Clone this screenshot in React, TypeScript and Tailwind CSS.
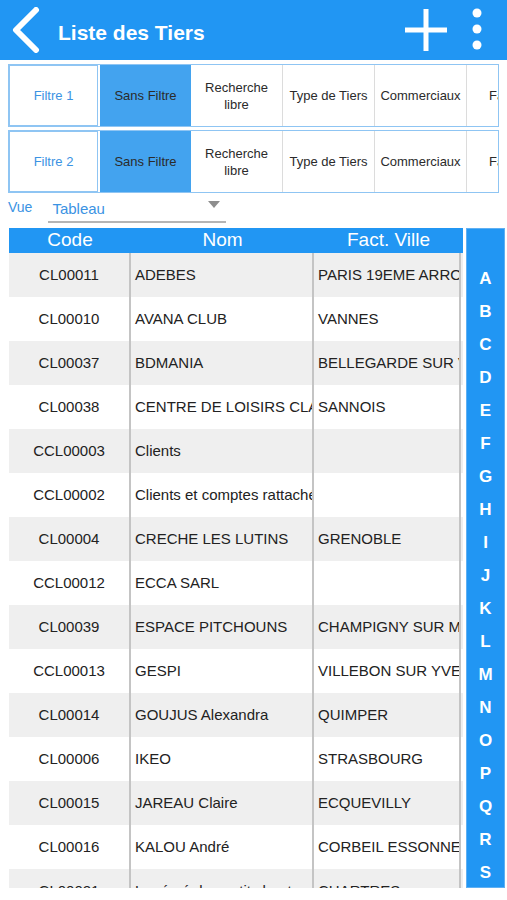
import React from "react";

const font = { fontFamily: '"Liberation Sans", Arial, sans-serif' };

const filterCells = ["Sans Filtre", "Recherche libre", "Type de Tiers", "Commerciaux", "Fa"];

type Row = { code: string; nom: string; ville: string };

const rows: Row[] = [
  { code: "CL00011", nom: "ADEBES", ville: "PARIS 19EME ARRONDISSEMENT" },
  { code: "CL00010", nom: "AVANA CLUB", ville: "VANNES" },
  { code: "CL00037", nom: "BDMANIA", ville: "BELLEGARDE SUR VALSERINE" },
  { code: "CL00038", nom: "CENTRE DE LOISIRS CLAPOTIS", ville: "SANNOIS" },
  { code: "CCL00003", nom: "Clients", ville: "" },
  { code: "CCL00002", nom: "Clients et comptes rattachés", ville: "" },
  { code: "CL00004", nom: "CRECHE LES LUTINS", ville: "GRENOBLE" },
  { code: "CCL00012", nom: "ECCA SARL", ville: "" },
  { code: "CL00039", nom: "ESPACE PITCHOUNS", ville: "CHAMPIGNY SUR MARNE" },
  { code: "CCL00013", nom: "GESPI", ville: "VILLEBON SUR YVETTE" },
  { code: "CL00014", nom: "GOUJUS Alexandra", ville: "QUIMPER" },
  { code: "CL00006", nom: "IKEO", ville: "STRASBOURG" },
  { code: "CL00015", nom: "JAREAU Claire", ville: "ECQUEVILLY" },
  { code: "CL00016", nom: "KALOU André", ville: "CORBEIL ESSONNES" },
  { code: "CL00021", nom: "La récré des petits bouts", ville: "CHARTRES" },
];

const letters = "ABCDEFGHIJKLMNOPQRS".split("");

const FilterRow = ({ label }: { label: string }) => (
  <div className="mx-2 flex h-[63px] overflow-hidden border border-[#8fc5f3]">
    <div className="flex w-[89px] shrink-0 items-center justify-center border border-[#8fc5f3] text-[13px] text-[#3b93e3]">
      {label}
    </div>
    <div className="ml-[2px] flex w-[91px] shrink-0 items-center justify-center bg-[#43a3ef] text-[13px] text-[#2b2b2b]">
      Sans Filtre
    </div>
    {filterCells.slice(1).map((c) => (
      <div
        key={c}
        className="flex w-[92px] shrink-0 items-center justify-center border-r border-[#dcdcdc] px-1 text-center text-[13px] leading-[17px] text-[#2b2b2b]"
      >
        {c === "Recherche libre" ? (
          <span>
            Recherche
            <br />
            libre
          </span>
        ) : c === "Fa" ? (
          <span className="w-full pl-[18px] text-left">Fa</span>
        ) : (
          c
        )}
      </div>
    ))}
  </div>
);

export default function App() {
  return (
    <div className="flex h-[900px] w-[507px] flex-col overflow-hidden bg-white" style={font}>
      <header className="flex h-[60px] shrink-0 items-center bg-[#2196f3] text-white">
        <svg width="30" height="46" viewBox="0 0 30 46" className="ml-[10px]">
          <path d="M26 3 L6 23 L26 43" fill="none" stroke="white" strokeWidth="6" strokeLinecap="round" strokeLinejoin="round" />
        </svg>
        <h1 className="ml-[18px] mt-[6px] text-[21px] font-bold">Liste des Tiers</h1>
        <div className="ml-auto flex items-center">
          <svg width="46" height="46" viewBox="0 0 46 46">
            <path d="M23 2 V44 M2 23 H44" stroke="white" strokeWidth="5" />
          </svg>
          <svg width="14" height="46" viewBox="0 0 14 46" className="ml-[21px] mr-[23px]">
            <circle cx="7" cy="6" r="4.5" fill="white" />
            <circle cx="7" cy="22" r="4.5" fill="white" />
            <circle cx="7" cy="38" r="4.5" fill="white" />
          </svg>
        </div>
      </header>

      <div className="mt-1 flex flex-col gap-[3px]">
        <FilterRow label="Filtre 1" />
        <FilterRow label="Filtre 2" />
      </div>

      <div className="flex h-[30px] shrink-0 items-end">
        <span className="mb-[5px] ml-2 text-[14px] text-[#3b93e3]">Vue</span>
        <div className="relative ml-[16px] flex h-[26px] w-[178px] items-center border-b-2 border-[#b5b5b5]">
          <span className="ml-[4px] text-[15px] text-[#3b93e3]">Tableau</span>
          <svg width="12" height="8" viewBox="0 0 12 8" className="absolute right-[6px] top-[4px]">
            <path d="M0 0 H12 L6 7 Z" fill="#8e8e8e" />
          </svg>
        </div>
      </div>

      <div className="mt-[5px] flex h-[660px] shrink-0">
        <div className="ml-[9px] flex w-[454px] flex-col">
          <div className="flex h-[25px] shrink-0 items-center bg-[#2196f3] text-[19px] text-white">
            <div className="w-[122px] text-center">Code</div>
            <div className="w-[183px] text-center">Nom</div>
            <div className="flex-1 text-center">Fact. Ville</div>
          </div>
          <div className="flex-1 overflow-hidden">
            {rows.map((r, i) => (
              <div
                key={r.code + i}
                className={
                  "flex h-[44px] items-center text-[15px] text-[#222] " +
                  (i % 2 === 0 ? "bg-[#efefef]" : "bg-white")
                }
              >
                <div className="flex h-full w-[122px] shrink-0 items-center justify-center border-r-2 border-[#c4c4c4]">
                  {r.code}
                </div>
                <div className="flex h-full w-[183px] shrink-0 items-center overflow-hidden whitespace-nowrap border-r-2 border-[#c4c4c4] pl-[4px]">
                  {r.nom}
                </div>
                <div className="flex h-full w-[147px] shrink-0 items-center overflow-hidden whitespace-nowrap border-r-2 border-[#c4c4c4] pl-[4px]">
                  {r.ville}
                </div>
              </div>
            ))}
          </div>
        </div>
        <div className="ml-[3px] flex w-[39px] flex-col items-center border border-[#5fb0f3] bg-[#2196f3] pt-[33px]">
          {letters.map((l) => (
            <div key={l} className="flex h-[33px] shrink-0 items-center justify-center text-[17px] font-bold text-white">
              {l}
            </div>
          ))}
        </div>
      </div>
    </div>
  );
}
